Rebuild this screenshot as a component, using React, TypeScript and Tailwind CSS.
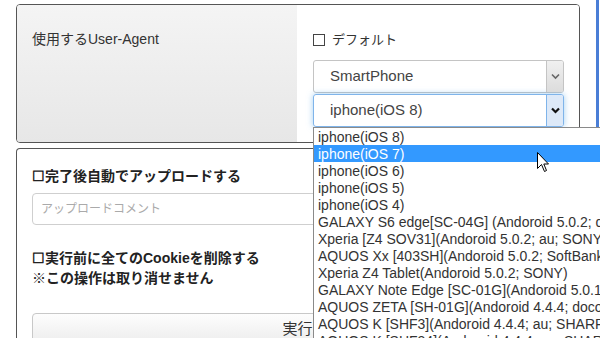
import React from "react";

const JP = { fontFamily: '"Liberation Sans", Arial, "Noto Sans CJK JP", sans-serif' };

const items = [
  "iphone(iOS 8)",
  "iphone(iOS 7)",
  "iphone(iOS 6)",
  "iphone(iOS 5)",
  "iphone(iOS 4)",
  "GALAXY S6 edge[SC-04G] (Andoroid 5.0.2; docomo; SAMSUNG)",
  "Xperia [Z4 SOV31](Andoroid 5.0.2; au; SONY)",
  "AQUOS Xx [403SH](Andoroid 5.0.2; SoftBank; SHARP)",
  "Xperia Z4 Tablet(Andoroid 5.0.2; SONY)",
  "GALAXY Note Edge [SC-01G](Andoroid 5.0.1; docomo; SAMSUNG)",
  "AQUOS ZETA [SH-01G](Andoroid 4.4.4; docomo; SHARP)",
  "AQUOS K [SHF3](Andoroid 4.4.4; au; SHARP)",
  "AQUOS K [SHF34](Andoroid 4.4.4; au; SHARP)",
];

function Chevron({ color, bold }: { color: string; bold?: boolean }) {
  return (
    <svg width="9" height="7" viewBox="0 0 9 7">
      <path d="M1 1.5 L4.5 5 L8 1.5" fill="none" stroke={color} strokeWidth={bold ? 2.2 : 1.6} />
    </svg>
  );
}

export default function App() {
  return (
    <div className="relative w-[600px] h-[338px] overflow-hidden bg-white text-[#333]" style={JP}>
      <div className="flex pt-[4px]">
        <div className="ml-[16px] w-[564px] h-[139px] border border-[#555] rounded-[4px] overflow-hidden flex">
          <div className="w-[281px] bg-gradient-to-b from-[#f4f4f4] to-[#e7e7e7] pl-[15px] pt-[26px] text-[14px] leading-[16px]">
            使用するUser-Agent
          </div>
          <div className="flex-1 bg-white pl-[16px] pt-[27px] pr-[15px]">
            <div className="flex items-center h-[16px] text-[13px]">
              <span className="w-[12px] h-[12px] border border-[#444] bg-white mr-[7px]" />
              <span>デフォルト</span>
            </div>
            <div className="mt-[12px] w-[251px] h-[33px] border border-[#c4c4c4] rounded-[3px] flex overflow-hidden">
              <div className="flex-1 pl-[16px] flex items-center text-[15px] text-[#444]">SmartPhone</div>
              <div className="w-[17px] bg-gradient-to-b from-[#f0f0f0] to-[#dcdcdc] border-l border-[#c4c4c4] flex items-center justify-center">
                <Chevron color="#666" />
              </div>
            </div>
            <div className="mt-[1px] w-[251px] h-[33px] border border-[#7fb4ea] rounded-[3px] flex overflow-hidden shadow-[0_0_6px_rgba(102,175,233,0.6)]">
              <div className="flex-1 pl-[16px] flex items-center text-[15px] text-[#444]">iphone(iOS 8)</div>
              <div className="w-[17px] bg-[#dde9f8] border-l border-[#7fb4ea] flex items-center justify-center">
                <Chevron color="#111" bold />
              </div>
            </div>
          </div>
        </div>
        <div className="ml-[16px] w-[3px] h-[127px] -mt-[4px] bg-[#4a7ed6]" />
      </div>

      <div className="mt-[5px] ml-[16px] w-[564px] h-[200px] border-l border-t border-r border-[#555] rounded-t-[4px] pl-[15px] pt-[18px]">
        <div className="text-[14px] font-bold leading-[18px] text-[#222]">☐完了後自動でアップロードする</div>
        <div className="mt-[8px] w-[531px] h-[32px] border border-[#cfcfcf] rounded-[4px] pl-[8px] flex items-center text-[12px] text-[#aaa]">
          アップロードコメント
        </div>
        <div className="mt-[23px] text-[14px] font-bold leading-[20px] text-[#222]">☐実行前に全てのCookieを削除する</div>
        <div className="text-[14px] font-bold leading-[20px] text-[#222]">※この操作は取り消せません</div>
        <div className="mt-[25px] w-[531px] h-[40px] border border-[#c8c8c8] rounded-[4px] bg-gradient-to-b from-[#fdfdfd] to-[#e8e8e8] flex justify-center pt-[4px] text-[15px] text-[#333]">
          実行
        </div>
      </div>

      <div className="absolute left-[313px] top-[127px] w-[300px] h-[230px] bg-white border-l border-t border-[#8a8a8a]">
        {items.map((t, i) => (
          <div
            key={i}
            className={
              i === 1
                ? "h-[17px] leading-[18px] pl-[4px] text-[14px] whitespace-nowrap bg-[#3399ff] text-white"
                : "h-[17px] leading-[18px] pl-[4px] text-[14px] whitespace-nowrap text-[#333]"
            }
          >
            {t}
          </div>
        ))}
      </div>

      <svg className="absolute left-[537px] top-[152px]" width="13" height="21" viewBox="0 0 13 21">
        <path d="M0.5 0.5 L0.5 16.5 L4.5 12.5 L7.5 19.5 L9.5 18.5 L6.8 12 L11.5 12 Z" fill="white" stroke="black" strokeWidth="1" strokeLinejoin="miter" />
      </svg>
    </div>
  );
}
